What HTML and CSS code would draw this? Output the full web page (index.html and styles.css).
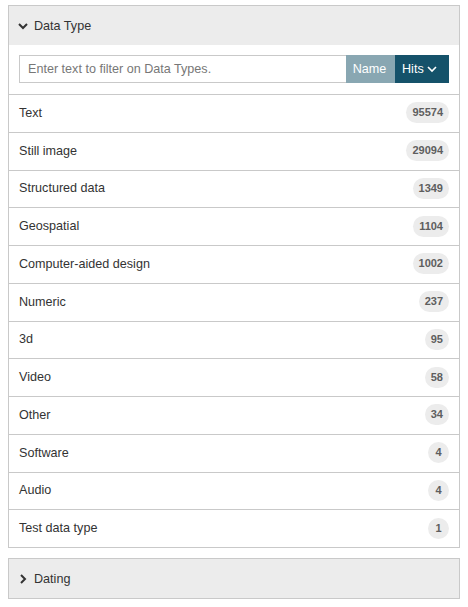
FILE: index.html
```html
<!DOCTYPE html>
<html lang="en">
<head>
<meta charset="utf-8">
<title>Data Type facet</title>
<link rel="stylesheet" href="styles.css">
</head>
<body>
<div class="panel">
  <div class="panel-heading">
    <svg class="chev" width="10" height="10" viewBox="0 0 10 10"><polyline points="1,3 5,7 9,3" fill="none" stroke="#333" stroke-width="2"/></svg>
    <span>Data Type</span>
  </div>
  <div class="search">
    <input class="filter" type="text" placeholder="Enter text to filter on Data Types.">
    <button class="btn btn-name">Name</button>
    <button class="btn btn-hits">Hits <svg width="10" height="8" viewBox="0 0 10 8"><polyline points="1,2 5,6 9,2" fill="none" stroke="#fff" stroke-width="1.6"/></svg></button>
  </div>
  <ul class="list">
    <li class="row"><span>Text</span><span class="badge">95574</span></li>
    <li class="row"><span>Still image</span><span class="badge">29094</span></li>
    <li class="row"><span>Structured data</span><span class="badge">1349</span></li>
    <li class="row"><span>Geospatial</span><span class="badge">1104</span></li>
    <li class="row"><span>Computer-aided design</span><span class="badge">1002</span></li>
    <li class="row"><span>Numeric</span><span class="badge">237</span></li>
    <li class="row"><span>3d</span><span class="badge">95</span></li>
    <li class="row"><span>Video</span><span class="badge">58</span></li>
    <li class="row"><span>Other</span><span class="badge">34</span></li>
    <li class="row"><span>Software</span><span class="badge">4</span></li>
    <li class="row"><span>Audio</span><span class="badge">4</span></li>
    <li class="row"><span>Test data type</span><span class="badge">1</span></li>
  </ul>
</div>
<div class="panel">
  <div class="panel-heading">
    <svg class="chev" width="10" height="10" viewBox="0 0 10 10"><polyline points="3,1 7,5 3,9" fill="none" stroke="#333" stroke-width="2"/></svg>
    <span>Dating</span>
  </div>
</div>
</body>
</html>
```
FILE: styles.css
```css
* { box-sizing: border-box; }
body {
  margin: 5px 8px 0;
  background: #fff;
  font-family: "Liberation Sans", Arial, sans-serif;
  font-size: 12.6px;
  color: #333;
}
.panel {
  border: 1px solid #c9c9c9;
  margin-bottom: 10px;
  background: #fff;
}
.panel-heading {
  height: 39px;
  background: #ececec;
  display: flex;
  align-items: center;
  gap: 6px;
  padding: 0 9px;
}
.chev { display: block; }
.search {
  display: flex;
  padding: 10px 10px 11px;
  border-bottom: 1px solid #c9c9c9;
}
.filter {
  flex: 1;
  height: 28px;
  border: 1px solid #c9c9c9;
  border-right: none;
  padding: 0 8px;
  font-family: inherit;
  font-size: 12.6px;
  color: #333;
  outline: none;
  min-width: 0;
}
.filter::placeholder { color: #777; }
.btn {
  height: 28px;
  border: none;
  color: #fff;
  font-family: inherit;
  font-size: 12.6px;
  display: flex;
  align-items: center;
  gap: 3px;
}
.btn-name {
  width: 49px;
  background: #89a7b2;
  justify-content: center;
  padding: 0 2px 0 0;
}
.btn-hits {
  width: 54px;
  background: #15526a;
  padding: 0 0 0 7px;
}
.list {
  list-style: none;
  margin: 0;
  padding: 0;
}
.row {
  display: flex;
  align-items: center;
  justify-content: space-between;
  height: 37.75px;
  padding: 0 10px 1px;
  border-bottom: 1px solid #c9c9c9;
}
.row:last-child {
  height: 36.75px;
  border-bottom: none;
}
.badge {
  min-width: 21px;
  height: 21px;
  line-height: 21px;
  padding: 0 6px;
  border-radius: 10.5px;
  background: #ececec;
  color: #5e5e5e;
  font-size: 11px;
  font-weight: bold;
  text-align: center;
}
```
